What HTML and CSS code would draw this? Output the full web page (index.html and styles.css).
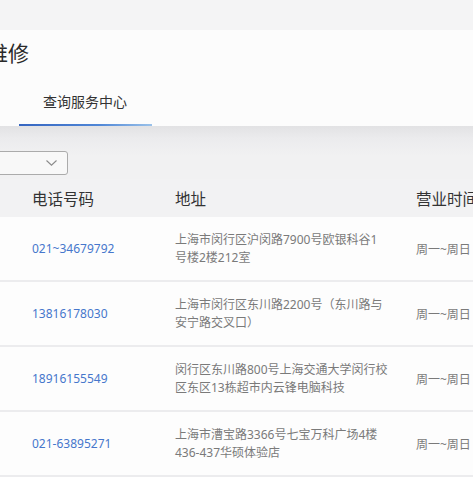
FILE: index.html
```html
<!DOCTYPE html>
<html lang="zh-CN">
<head>
<meta charset="utf-8">
<title>维修</title>
<link rel="stylesheet" href="styles.css">
</head>
<body>
<div class="page">
  <header class="card">
    <h1 class="title">维修</h1>
    <nav class="tabs">
      <div class="tab active">查询服务中心</div>
    </nav>
  </header>
  <main class="content">
    <div class="select">
      <svg class="chev" width="11" height="6" viewBox="0 0 11 6"><polyline points="0.5,0.5 5.5,5.2 10.5,0.5" fill="none" stroke="#8a8a8a" stroke-width="1.1"/></svg>
    </div>
    <div class="table">
      <div class="row head">
        <div class="c1">电话号码</div>
        <div class="c2">地址</div>
        <div class="c3">营业时间</div>
      </div>
      <div class="row">
        <div class="c1 phone">021~34679792</div>
        <div class="c2 addr">上海市闵行区沪闵路7900号欧银科谷1号楼2楼212室</div>
        <div class="c3 hours">周一~周日</div>
      </div>
      <div class="row">
        <div class="c1 phone">13816178030</div>
        <div class="c2 addr">上海市闵行区东川路2200号（东川路与安宁路交叉口）</div>
        <div class="c3 hours">周一~周日</div>
      </div>
      <div class="row">
        <div class="c1 phone">18916155549</div>
        <div class="c2 addr">闵行区东川路800号上海交通大学闵行校区东区13栋超市内云锋电脑科技</div>
        <div class="c3 hours">周一~周日</div>
      </div>
      <div class="row">
        <div class="c1 phone">021-63895271</div>
        <div class="c2 addr">上海市漕宝路3366号七宝万科广场4楼436-437华硕体验店</div>
        <div class="c3 hours">周一~周日</div>
      </div>
    </div>
  </main>
</div>
</body>
</html>
```
FILE: styles.css
```css
* { box-sizing: border-box; }
html, body {
  margin: 0;
  padding: 0;
  overflow: hidden;
  width: 473px;
  height: 477px;
}
body {
  background: #f4f4f5;
  font-family: "Noto Sans", "Noto Sans CJK SC", sans-serif;
  color: #333;
}
.page {
  padding-top: 30px;
  width: 620px;
}
.card {
  background: #fcfcfc;
  padding-top: 8px;
  display: flex;
  flex-direction: column;
}
.title {
  margin: 0 0 0 -13px;
  font-size: 21px;
  line-height: 30px;
  font-weight: 400;
  color: #2a2a2a;
}
.tabs {
  display: flex;
  padding-left: 19px;
}
.tab {
  padding: 26px 25px 14px 24px;
  font-size: 14px;
  line-height: 16px;
  color: #333;
  border-bottom: 2px solid transparent;
}
.tab.active {
  border-image: linear-gradient(90deg, #3565c0, #4f86d6 60%, #9cc3ea) 1;
}
.content {
  background: linear-gradient(#e2e2e4 0, #ebebed 12px, #f1f1f2 30px);
  padding-top: 25px;
}
.select {
  margin-left: -22px;
  width: 90px;
  height: 24px;
  border: 1px solid #ababab;
  border-radius: 3px;
  background: #f8f8f8;
  display: flex;
  align-items: center;
  justify-content: flex-end;
  padding-right: 10px;
}
.chev { display: block; }
.table {
  margin-top: 4px;
  display: flex;
  flex-direction: column;
}
.row {
  display: grid;
  grid-template-columns: 175px 241px 1fr;
  align-items: center;
  height: 65px;
  background: #fdfdfd;
  border-bottom: 2px solid #ececee;
}
.row.head {
  height: 38px;
  background: #f2f2f3;
  border-bottom: none;
  font-size: 15.5px;
  color: #333;
}
.c1 { padding-left: 32px; }
.phone {
  font-size: 12px;
  color: #4677cc;
}
.addr {
  font-size: 12px;
  line-height: 18px;
  color: #7a7a7a;
  width: 213.5px;
}
.hours {
  font-size: 12px;
  color: #7a7a7a;
}
```
